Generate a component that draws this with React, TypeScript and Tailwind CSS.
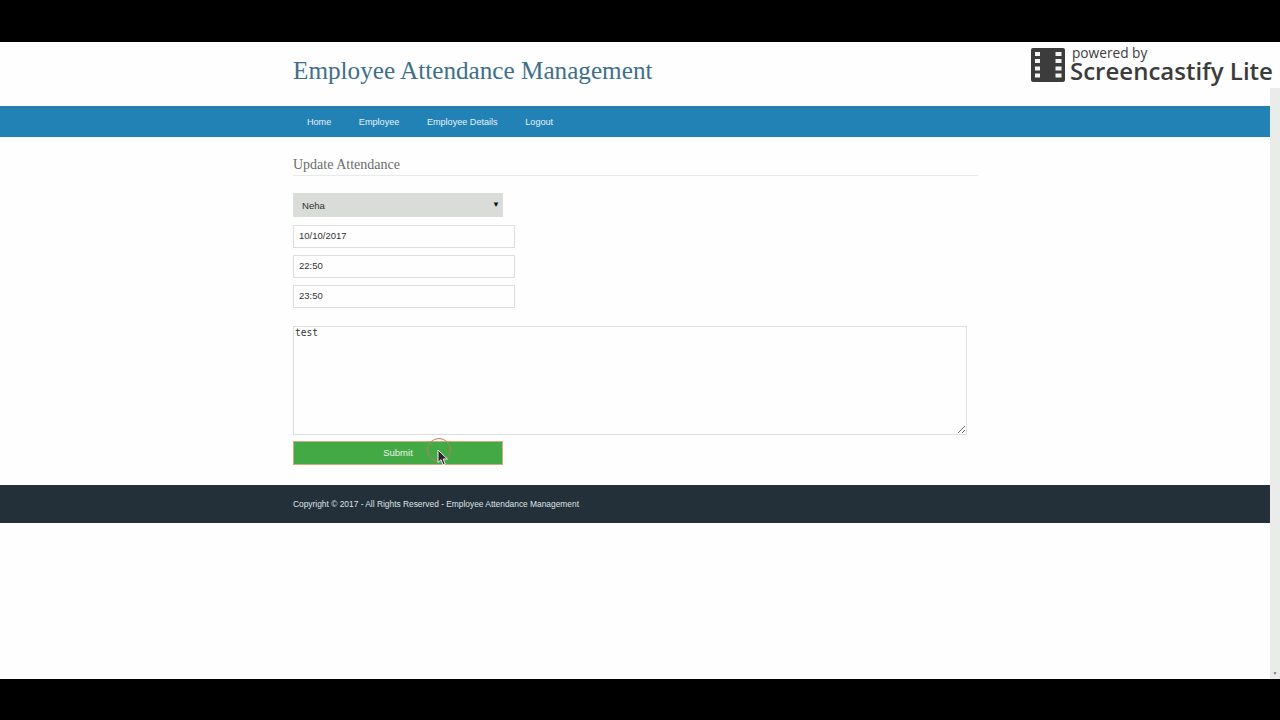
const sans = "font-['Liberation_Sans',Arial,sans-serif]";
const serif = "font-['Liberation_Serif','Times_New_Roman',serif]";

const navItems = ["Home", "Employee", "Employee Details", "Logout"];
const fieldValues = ["10/10/2017", "22:50", "23:50"];

function FilmIcon() {
  return (
    <svg width="34" height="34" viewBox="0 0 34 34" className="block">
      <rect x="0" y="0" width="34" height="34" rx="2" fill="#3c3c3c" />
      {[4, 11, 18.5, 25.5].map((y) => (
        <g key={y} fill="#f4f4f4">
          <rect x="4" y={y} width="5" height="4" />
          <rect x="24.5" y={y} width="6" height="4" />
        </g>
      ))}
    </svg>
  );
}

function Cursor() {
  return (
    <div className="absolute left-[427px] top-[438px] h-[24px] w-[24px] rounded-full border-[1.5px] border-[#bf7a62]">
      <svg width="12" height="17" viewBox="0 0 12 17" className="absolute left-[9px] top-[10px]">
        <path d="M1 1v12.5l3-2.8 2 5 2.2-.9-2-4.8h4.2z" fill="#2a2a2a" stroke="#f4f4f4" strokeWidth="1" />
      </svg>
    </div>
  );
}

export default function App() {
  return (
    <div className={`relative flex h-[720px] w-[1280px] flex-col overflow-hidden bg-black ${sans}`}>
      <div className="h-[42px] shrink-0 bg-black"></div>

      <div className="flex h-[637px] shrink-0 bg-[#fdfefd]">
        <div className="w-[1270px] shrink-0">
          {/* Header */}
          <header className="flex h-[64px] items-center pl-[293px] pb-[7px]">
            <h1 className={`text-[25.2px] leading-none font-normal text-[#3f7089] ${serif}`}>
              Employee Attendance Management
            </h1>
          </header>

          {/* Nav */}
          <nav className="flex h-[31px] items-center gap-[27.6px] bg-[#2281b5] pl-[307px] pt-[2px]">
            {navItems.map((item) => (
              <span key={item} className="text-[9.1px] text-[#e6f2f8]">
                {item}
              </span>
            ))}
          </nav>

          {/* Form */}
          <main className="ml-[293px] w-[685px]">
            <h2 className={`mt-[20px] border-b border-[#e8e9e8] pb-[3px] text-[14px] leading-[15px] font-normal text-[#6c6c6c] ${serif}`}>
              Update Attendance
            </h2>

            <div className="mt-[17px] flex h-[24px] w-[210px] items-center justify-between bg-[#dadcda] pr-[3px] pl-[9px] pt-[2px] text-[9.6px] text-[#303030]">
              <span>Neha</span>
              <span className="pb-[2px] text-[8px] leading-none text-[#111111]">▼</span>
            </div>

            <div className="mt-[8px] flex flex-col gap-[7px]">
              {fieldValues.map((value) => (
                <input
                  key={value}
                  readOnly
                  value={value}
                  className="h-[23px] w-[222px] border border-[#dcdedc] bg-[#fdfefd] px-[5px] pb-[2px] text-[9.5px] text-[#333333] outline-none"
                />
              ))}
            </div>

            <textarea
              readOnly
              value="test"
              className="mt-[18px] block h-[109px] w-[674px] border border-[#dcdedc] bg-[#fdfefd] px-[1px] py-0 font-['DejaVu_Sans_Mono',monospace] text-[9.6px] leading-[12px] text-[#333333] outline-none"
            />

            <button className="mt-[6px] block h-[24px] w-[210px] border border-[#d9a77a] bg-[#43a945] text-center text-[9.5px] text-[#e8f5e8]">
              Submit
            </button>
          </main>

          {/* Footer */}
          <footer className="mt-[20px] flex h-[38px] items-center bg-[#232f39] pl-[293px] pt-[1px] text-[8.4px] text-[#dfe3e6]">
            Copyright © 2017 - All Rights Reserved - Employee Attendance Management
          </footer>
        </div>

        <div className="relative w-[10px] shrink-0 bg-[#eaecea]">
          <div className="absolute right-0 bottom-[3px] left-0 text-center text-[5px] leading-none text-[#777777]">▼</div>
        </div>
      </div>

      <div className="flex-1 bg-black"></div>

      {/* Screencastify watermark */}
      <div className="absolute top-[42px] right-0 flex h-[46px] w-[250px] items-start gap-[5px] bg-[#fdfefd] pl-[1px] pt-[4px] font-['Open_Sans',sans-serif] text-[#3c3c3c]">
        <div className="mt-[2px]">
          <FilmIcon />
        </div>
        <div className="flex flex-col">
          <span className="ml-[2px] text-[13.7px] leading-[14px]">powered by</span>
          <span className="text-[24px] leading-[22px] font-semibold whitespace-nowrap">Screencastify Lite</span>
        </div>
      </div>

      <Cursor />
    </div>
  );
}
